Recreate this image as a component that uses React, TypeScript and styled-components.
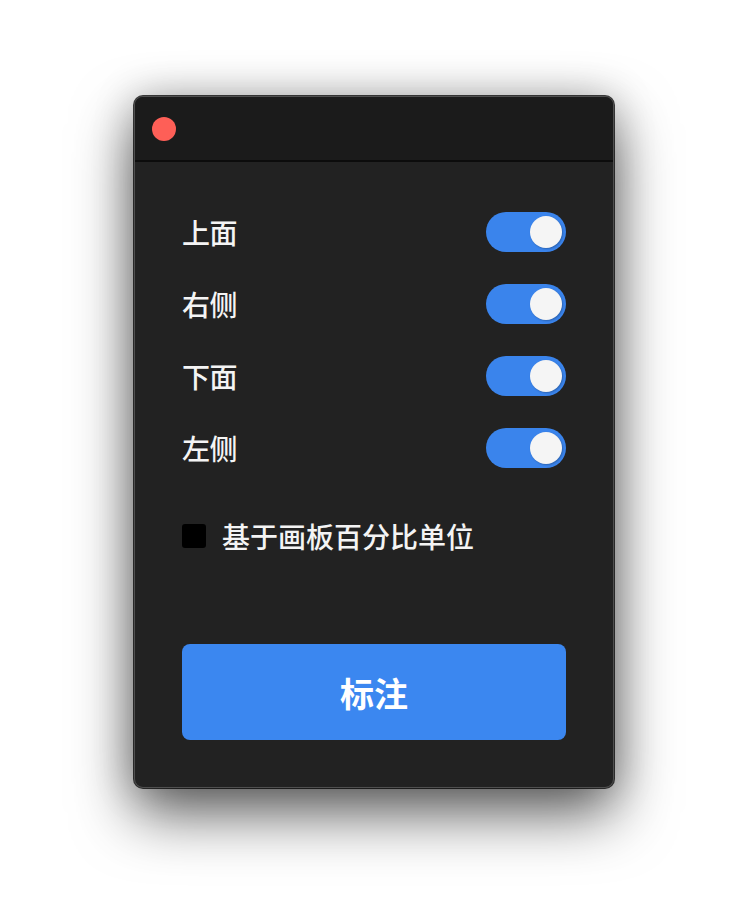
import { useState } from 'react';
import styled, { createGlobalStyle } from 'styled-components';

// ─── Global ───────────────────────────────────────────────────────────────────

const GlobalStyle = createGlobalStyle`
  html, body {
    margin: 0;
    padding: 0;
    background: #ffffff;
  }
  body {
    font-family: "Noto Sans CJK SC", "Noto Sans", sans-serif;
  }
`;

// ─── Styled components ────────────────────────────────────────────────────────

const Page = styled.div`
  width: 748px;
  height: 918px;
  display: flex;
  justify-content: center;
  align-items: flex-start;
  padding-top: 96px;
  box-sizing: border-box;
`;

const Window = styled.div`
  width: 480px;
  height: 692px;
  box-sizing: border-box;
  display: flex;
  flex-direction: column;
  background: #222222;
  border: 1px solid #505050;
  border-radius: 9px;
  overflow: hidden;
  box-shadow:
    0 0 0 1px rgba(0, 0, 0, 0.75),
    0 26px 60px rgba(0, 0, 0, 0.62),
    0 0 40px rgba(0, 0, 0, 0.22);
`;

const TitleBar = styled.div`
  height: 63px;
  flex-shrink: 0;
  display: flex;
  align-items: center;
  padding-left: 17px;
  background: #1b1b1b;
  border-bottom: 2px solid #0c0c0c;
`;

const CloseDot = styled.span`
  width: 24px;
  height: 24px;
  border-radius: 50%;
  background: #fe5f57;
`;

const Content = styled.div`
  flex: 1;
  display: flex;
  flex-direction: column;
  padding: 50px 47px 47px;
`;

const OptionList = styled.div`
  display: flex;
  flex-direction: column;
  gap: 32px;
`;

const OptionRow = styled.div`
  height: 40px;
  display: flex;
  align-items: center;
  justify-content: space-between;
`;

const Label = styled.span`
  font-size: 28px;
  font-weight: 500;
  line-height: 1;
  color: #f4f4f4;
  letter-spacing: -0.5px;
`;

const Track = styled.button<{ $on: boolean }>`
  position: relative;
  width: 80px;
  height: 40px;
  padding: 0;
  border: none;
  border-radius: 20px;
  background: ${({ $on }) => ($on ? '#3a84ec' : '#444444')};
  cursor: pointer;
`;

const Knob = styled.span<{ $on: boolean }>`
  position: absolute;
  top: 4px;
  left: ${({ $on }) => ($on ? '44px' : '4px')};
  width: 32px;
  height: 32px;
  border-radius: 50%;
  background: #f5f5f5;
  box-shadow: 1px 1px 2px rgba(0, 0, 0, 0.25);
`;

const CheckRow = styled.label`
  height: 40px;
  margin-top: 48px;
  display: flex;
  align-items: center;
  gap: 16px;
  cursor: pointer;
`;

const Box = styled.span<{ $checked: boolean }>`
  width: 24px;
  height: 24px;
  border-radius: 3px;
  background: ${({ $checked }) => ($checked ? '#3a84ec' : '#000000')};
`;

const CheckText = styled.span`
  font-size: 28px;
  font-weight: 500;
  line-height: 1;
  color: #f4f4f4;
`;

const PrimaryButton = styled.button`
  margin-top: 88px;
  height: 96px;
  width: 100%;
  border: none;
  border-radius: 8px;
  background: #3b87f0;
  color: #ffffff;
  font-family: "Noto Sans CJK SC", "Noto Sans", sans-serif;
  font-size: 34px;
  font-weight: 700;
  cursor: pointer;
`;

// ─── Page ─────────────────────────────────────────────────────────────────────

const SIDES = ['上面', '右侧', '下面', '左侧'];

export default function App() {
  const [sides, setSides] = useState<boolean[]>([true, true, true, true]);
  const [percent, setPercent] = useState(false);

  const toggle = (i: number) =>
    setSides((prev) => prev.map((v, j) => (j === i ? !v : v)));

  return (
    <>
      <GlobalStyle />
      <Page>
        <Window>
          <TitleBar>
            <CloseDot />
          </TitleBar>
          <Content>
            <OptionList>
              {SIDES.map((side, i) => (
                <OptionRow key={side}>
                  <Label>{side}</Label>
                  <Track $on={sides[i]} role="switch" aria-checked={sides[i]} onClick={() => toggle(i)}>
                    <Knob $on={sides[i]} />
                  </Track>
                </OptionRow>
              ))}
            </OptionList>
            <CheckRow onClick={() => setPercent((p) => !p)}>
              <Box $checked={percent} />
              <CheckText>基于画板百分比单位</CheckText>
            </CheckRow>
            <PrimaryButton>标注</PrimaryButton>
          </Content>
        </Window>
      </Page>
    </>
  );
}
